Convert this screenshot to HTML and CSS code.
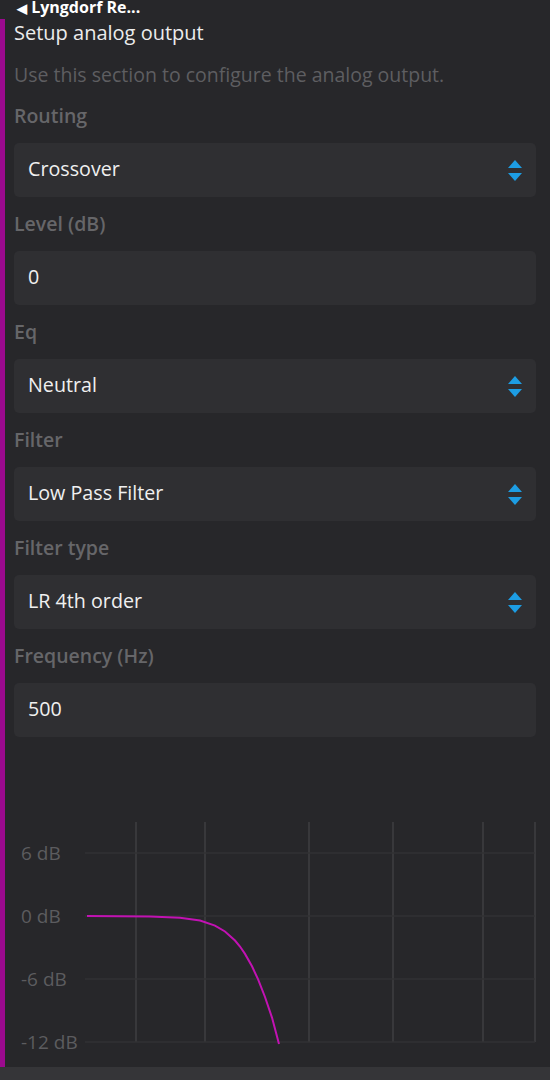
FILE: index.html
```html
<!DOCTYPE html>
<html lang="en">
<head>
    <meta charset="UTF-8">
    <meta name="viewport" content="width=device-width, initial-scale=1.0">
    <title>Setup analog output</title>
    <link rel="stylesheet" href="styles.css">
</head>
<body>
    <div class="topbar"><span class="back">&#9664;</span> Lyngdorf Re...</div>

    <div class="panel">
        <h1>Setup analog output</h1>
        <p class="desc">Use this section to configure the analog output.</p>

        <div class="field">
            <div class="label">Routing</div>
            <div class="box select">Crossover <span class="arrows"><i class="up"></i><i class="down"></i></span></div>
        </div>
        <div class="field">
            <div class="label">Level (dB)</div>
            <div class="box">0</div>
        </div>
        <div class="field">
            <div class="label">Eq</div>
            <div class="box select">Neutral <span class="arrows"><i class="up"></i><i class="down"></i></span></div>
        </div>
        <div class="field">
            <div class="label">Filter</div>
            <div class="box select">Low Pass Filter <span class="arrows"><i class="up"></i><i class="down"></i></span></div>
        </div>
        <div class="field">
            <div class="label">Filter type</div>
            <div class="box select">LR 4th order <span class="arrows"><i class="up"></i><i class="down"></i></span></div>
        </div>
        <div class="field">
            <div class="label">Frequency (Hz)</div>
            <div class="box">500</div>
        </div>

        <svg class="chart" width="545" height="330" viewBox="5 737 545 330">
            <g class="vgrid">
                <line x1="136" y1="822" x2="136" y2="1042"/>
                <line x1="205" y1="822" x2="205" y2="1042"/>
                <line x1="309" y1="822" x2="309" y2="1042"/>
                <line x1="393" y1="822" x2="393" y2="1042"/>
                <line x1="483" y1="822" x2="483" y2="1042"/>
                <line x1="535" y1="822" x2="535" y2="1042"/>
            </g>
            <g class="hgrid">
                <line x1="85" y1="853" x2="535" y2="853"/>
                <line x1="85" y1="916" x2="535" y2="916"/>
                <line x1="85" y1="979" x2="535" y2="979"/>
                <line x1="85" y1="1042" x2="535" y2="1042"/>
            </g>
            <g class="ylabels">
                <text x="21" y="860">6 dB</text>
                <text x="21" y="923">0 dB</text>
                <text x="21" y="986">-6 dB</text>
                <text x="21" y="1049">-12 dB</text>
            </g>
            <path class="curve" d="M87 916 L150 916.4 L180 917.7 L200 920.6 L215 925.6 L225 931.5 L235 940.5 L240 946.5 L245 953.9 L252 966.3 L258 979.2 L265 997 L272 1017.6 L279 1044"/>
        </svg>
    </div>

    <div class="bottombar"></div>
</body>
</html>
```

FILE: styles.css
```css
body {
    margin: 0;
    background-color: #27272a;
    font-family: "Open Sans", "Noto Sans", sans-serif;
    color: #ececec;
}
.topbar {
    height: 19px;
    padding-left: 17px;
    font-size: 16px;
    font-weight: bold;
    line-height: 15px;
    color: #fff;
    overflow: hidden;
}
.back {
    font-size: 13px;
}
.panel {
    border-left: 5px solid #9b0a8e;
    padding: 0 14px 0 9px;
}
h1 {
    margin: 0;
    font-size: 20px;
    font-weight: normal;
    line-height: 28px;
    color: #ececec;
}
.desc {
    margin: 14px 0 0;
    font-size: 19.5px;
    line-height: 28px;
    color: #5e5e61;
}
.field {
    padding-top: 13px;
}
.label {
    font-size: 19.5px;
    font-weight: 600;
    line-height: 28px;
    color: #666669;
    margin-bottom: 13px;
}
.box {
    height: 54px;
    box-sizing: border-box;
    background-color: #2f2f32;
    border-radius: 5px;
    padding: 0 14px 4px;
    font-size: 19.7px;
    color: #f0f0f0;
    display: flex;
    justify-content: space-between;
    align-items: center;
}
.arrows {
    display: flex;
    flex-direction: column;
    gap: 5px;
    margin-top: 4px;
}
.arrows i {
    width: 0;
    height: 0;
    border-left: 7px solid transparent;
    border-right: 7px solid transparent;
}
.arrows .up {
    border-bottom: 8px solid #1d9de3;
}
.arrows .down {
    border-top: 8px solid #1d9de3;
}
.chart {
    display: block;
    margin-left: -9px;
}
.vgrid line {
    stroke: #38383b;
    stroke-width: 2;
}
.hgrid line {
    stroke: #323235;
    stroke-width: 1.5;
}
.ylabels text {
    font-family: "Open Sans", "Noto Sans", sans-serif;
    font-size: 19px;
    fill: #5c5c5f;
}
.curve {
    fill: none;
    stroke: #c212b3;
    stroke-width: 2;
}
.bottombar {
    height: 13px;
    background-color: #353538;
}
```
